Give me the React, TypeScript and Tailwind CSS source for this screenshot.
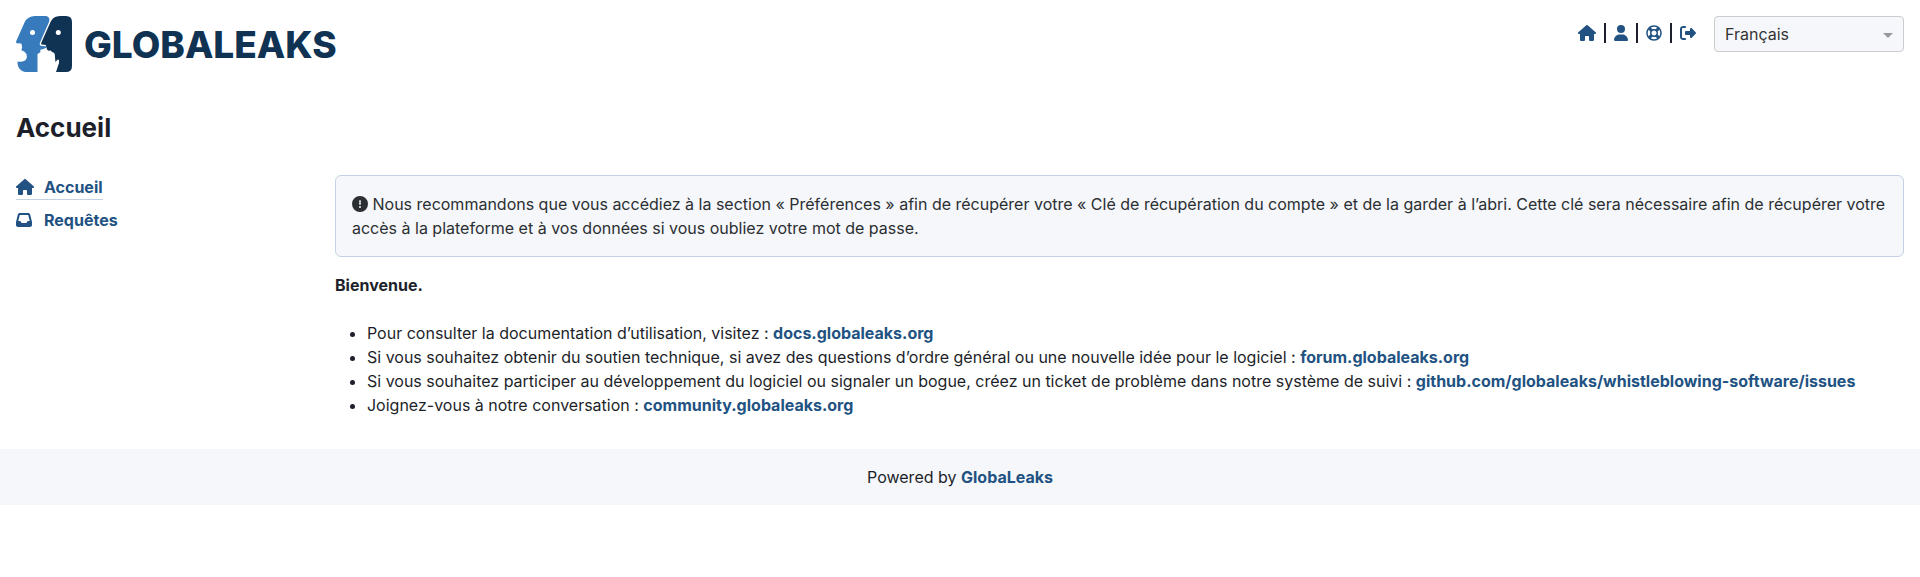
import type { ReactNode } from "react";
import { FaRegLifeRing } from "react-icons/fa";
import {
  FaCircleExclamation,
  FaHouse,
  FaInbox,
  FaRightFromBracket,
  FaUser,
} from "react-icons/fa6";

function Logo() {
  return (
    <a href="#/" className="flex items-center gap-3 text-[#103253]">
      <svg viewBox="0 0 56 56" className="size-14 shrink-0" aria-hidden="true">
        <path
          fill="#377bbc"
          d="M19 0H30Q34.5 1 33 6L23.8 27Q23.2 29.8 26 30L30 30.2L30.5 31.5L27.5 33L24.3 33.8L24.4 36.2L21.5 38V56H9Q2.5 54.5 1.6 48L1.5 45.5Q9.5 46.5 10.8 41.8Q11.2 37.5 8.2 35.6L5.3 34.2L6.2 31.5L5.4 27.5L0.6 27.3Q-0.3 26.5 0.5 24.5L8.5 6.5Q11.5 0 19 0Z"
        />
        <path
          fill="#103253"
          d="M44 0H50Q56 0 56 6V50Q56 56 50 56H40L42.3 49Q43.5 46.5 43 44.2Q42 42.8 40.8 44.5L39.4 46L38.8 38.5Q38.5 36.2 36.5 36.2L34.5 34.5L32.5 34.7L31 33.5L29.8 29L25.6 28.6Q24.8 28 25.3 26.8L34.5 6Q37 0 44 0Z"
        />
        <circle cx="16.5" cy="16.5" r="2.5" fill="#fff" />
        <circle cx="42.3" cy="16.5" r="2.5" fill="#fff" />
      </svg>
      <span className="text-[37px] leading-none font-extrabold">GLOBALEAKS</span>
    </a>
  );
}

function TextLink({ href, children }: { href: string; children: ReactNode }) {
  return (
    <a href={href} className="font-bold text-[#215282]">
      {children}
    </a>
  );
}

function Separator() {
  return <span aria-hidden="true" className="h-5 w-[2px] bg-[#1d1f2a]" />;
}

export default function App() {
  return (
    <div className="bg-white font-[Inter,'Liberation_Sans',sans-serif] text-base text-[#1d1f2a]">
      <header className="flex items-start justify-between p-4">
        <Logo />
        <div className="flex items-start gap-[18px]">
          <nav aria-label="Compte" className="flex h-[34px] items-center gap-2 text-[#215282]">
            <a href="#/home" aria-label="Accueil">
              <FaHouse className="h-4 w-[18px]" />
            </a>
            <Separator />
            <a href="#/preferences" aria-label="Préférences">
              <FaUser className="h-4 w-[14px]" />
            </a>
            <Separator />
            <a href="#/support" aria-label="Assistance">
              <FaRegLifeRing className="size-4" />
            </a>
            <Separator />
            <a href="#/logout" aria-label="Déconnexion">
              <FaRightFromBracket className="size-4" />
            </a>
          </nav>
          <div className="relative">
            <select
              aria-label="Langue"
              className="h-9 w-[190px] appearance-none rounded-sm border border-[#cccccc] bg-[#f5f7fb] px-[10px] text-[#333333]"
            >
              <option>Français</option>
            </select>
            <svg
              viewBox="0 0 10 5"
              className="pointer-events-none absolute top-[17px] right-[11px] h-[5px] w-[10px]"
              aria-hidden="true"
            >
              <path d="M0 0H10L5 5Z" fill="#999999" />
            </svg>
          </div>
        </div>
      </header>

      <h1 className="px-4 pt-6 pb-8 text-[26px] leading-[31px] font-bold">Accueil</h1>

      <div className="flex items-start">
        <nav
          aria-label="Menu principal"
          className="flex w-1/6 shrink-0 flex-col items-start gap-2 pl-4 font-bold text-[#215282]"
        >
          <a href="#/home" className="flex items-center border-b border-[#c5d1e0]">
            <span className="w-7">
              <FaHouse className="h-4 w-[18px]" />
            </span>
            Accueil
          </a>
          <a href="#/requests" className="flex items-center">
            <span className="w-7">
              <FaInbox className="size-4" />
            </span>
            Requêtes
          </a>
        </nav>

        <main className="min-w-0 flex-1 pr-4 pb-8 pl-[15px]">
          <div
            role="note"
            className="mb-4 rounded-md border border-[#c5d1e4] bg-[#f5f7fb] p-4 text-[#2b2f32]"
          >
            <FaCircleExclamation className="inline size-4 align-[-2px]" /> Nous recommandons que vous
            accédiez à la section « Préférences » afin de récupérer votre « Clé de récupération du
            compte » et de la garder à l’abri. Cette clé sera nécessaire afin de récupérer votre accès
            à la plateforme et à vos données si vous oubliez votre mot de passe.
          </div>
          <p className="mb-6 font-bold">Bienvenue.</p>
          <ul className="list-disc pl-8">
            <li>
              Pour consulter la documentation d’utilisation, visitez :{" "}
              <TextLink href="https://docs.globaleaks.org">docs.globaleaks.org</TextLink>
            </li>
            <li>
              Si vous souhaitez obtenir du soutien technique, si avez des questions d’ordre général ou
              une nouvelle idée pour le logiciel :{" "}
              <TextLink href="https://forum.globaleaks.org">forum.globaleaks.org</TextLink>
            </li>
            <li>
              Si vous souhaitez participer au développement du logiciel ou signaler un bogue, créez un
              ticket de problème dans notre système de suivi :{" "}
              <TextLink href="https://github.com/globaleaks/whistleblowing-software/issues">
                github.com/globaleaks/whistleblowing-software/issues
              </TextLink>
            </li>
            <li>
              Joignez-vous à notre conversation :{" "}
              <TextLink href="https://community.globaleaks.org">community.globaleaks.org</TextLink>
            </li>
          </ul>
        </main>
      </div>

      <footer className="bg-[#f5f7fb] p-4 text-center">
        Powered by <TextLink href="https://www.globaleaks.org">GlobaLeaks</TextLink>
      </footer>
    </div>
  );
}
